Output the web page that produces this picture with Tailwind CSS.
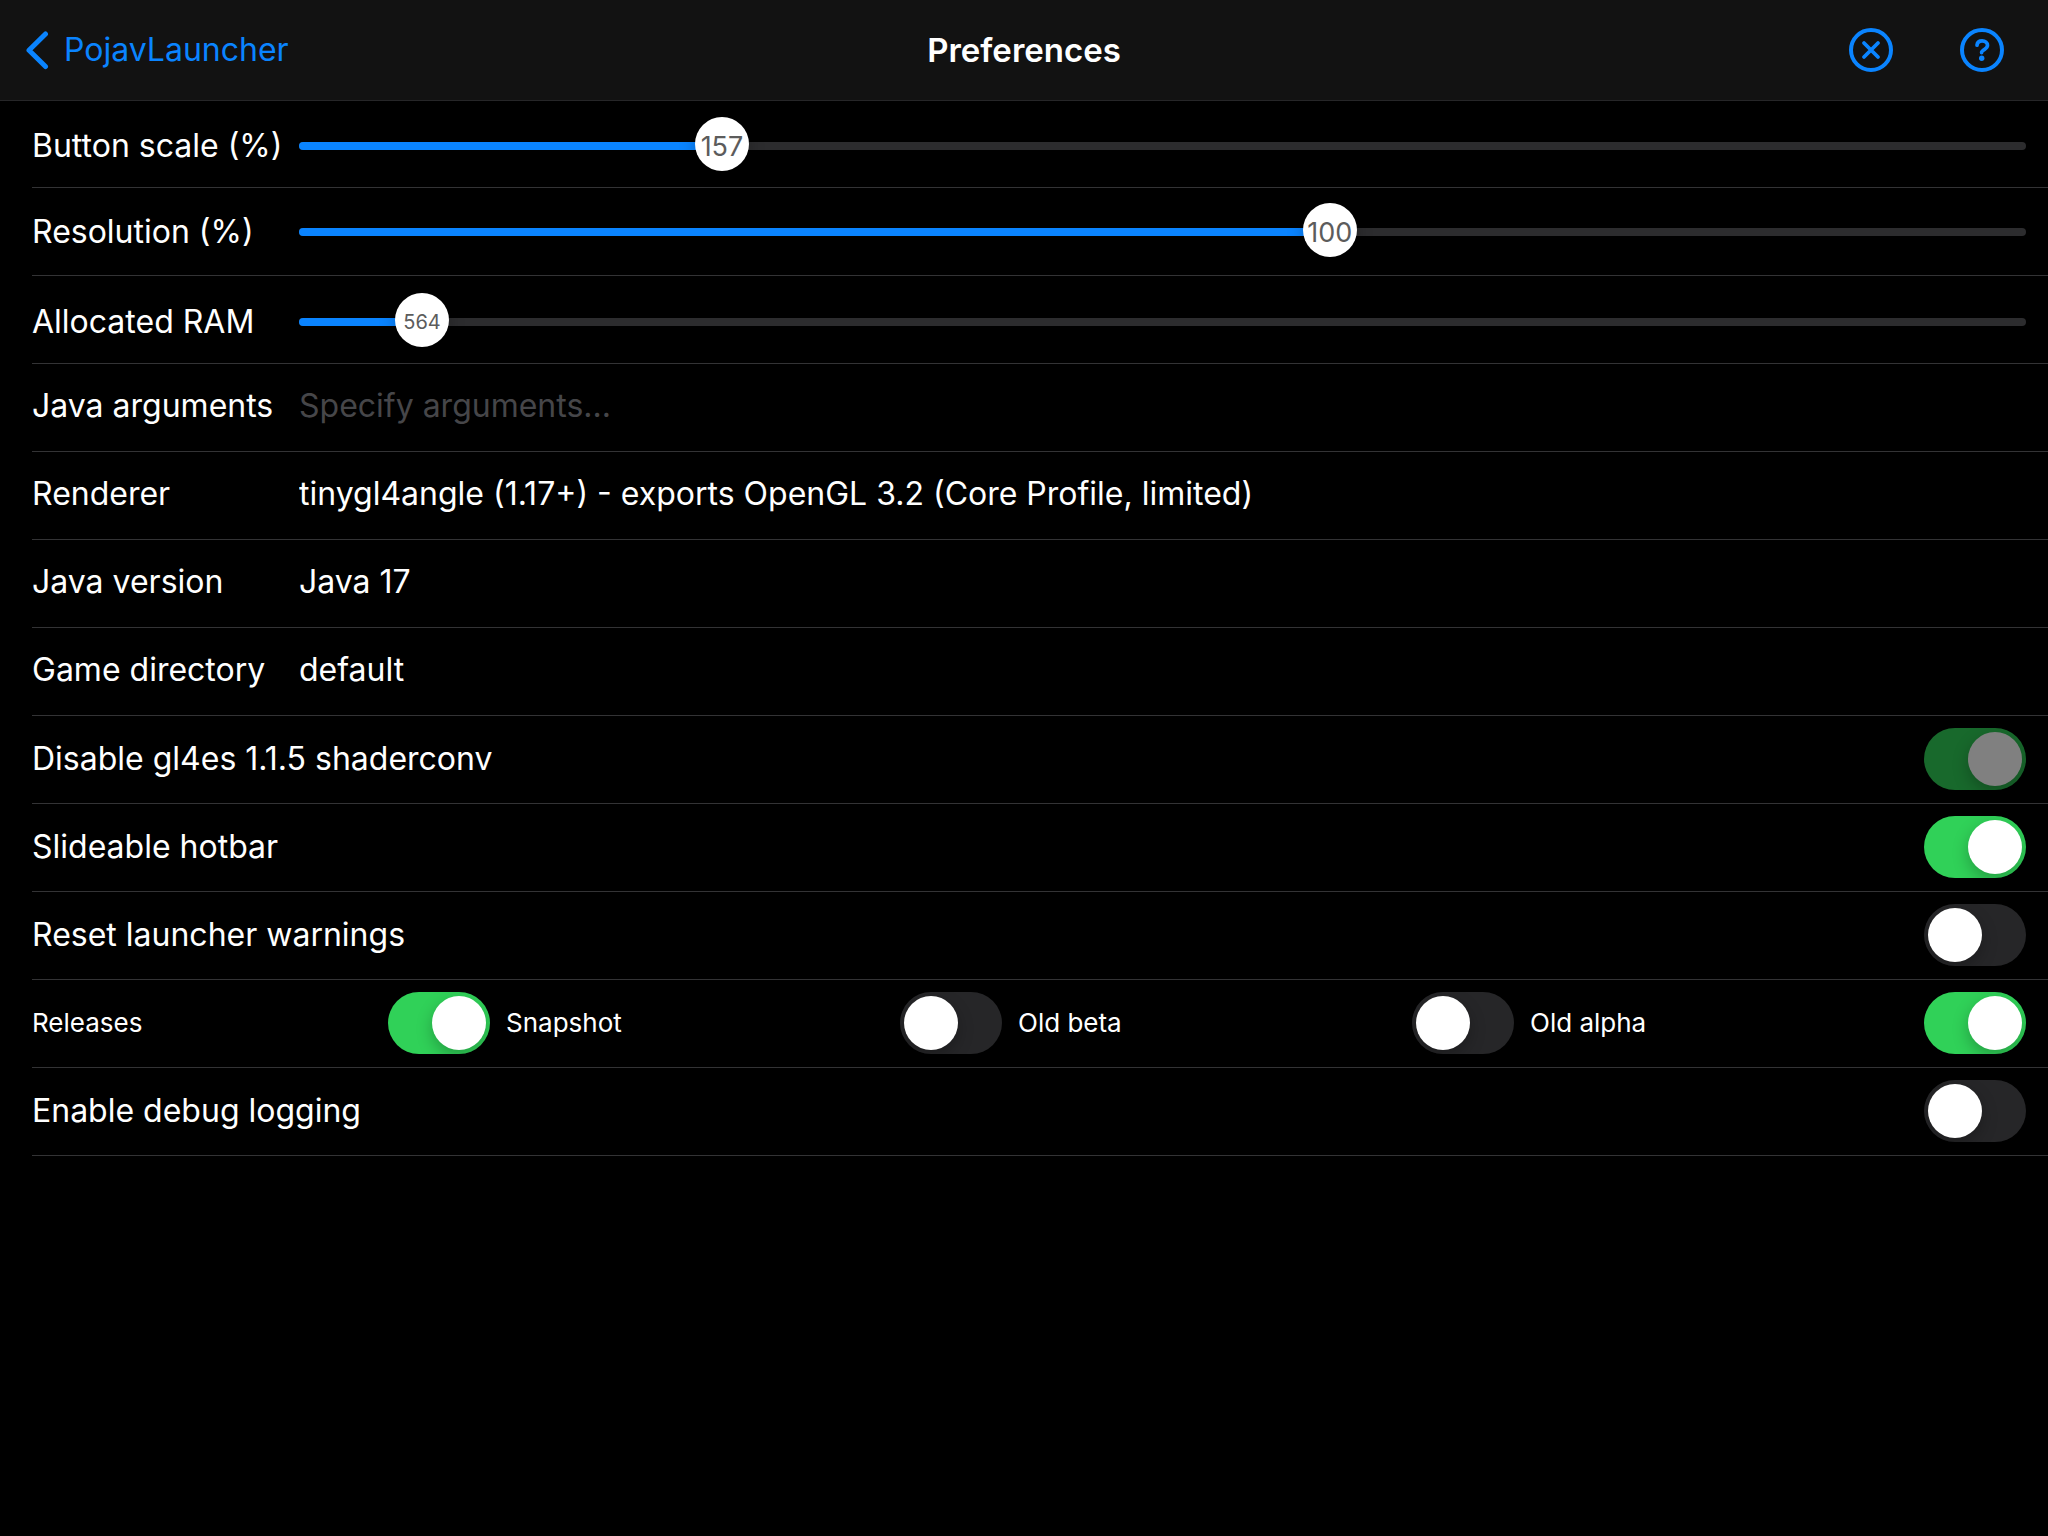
<!DOCTYPE html>
<html lang="en">
<head>
<meta charset="utf-8">
<meta name="viewport" content="width=device-width, initial-scale=1">
<title>Preferences</title>
<script src="https://cdn.jsdelivr.net/npm/@tailwindcss/browser@4"></script>
</head>
<body class="min-h-screen bg-black font-[Inter,'Liberation_Sans',sans-serif] text-[32px] leading-10 text-white">

<header class="grid h-[101px] grid-cols-[1fr_auto_1fr] items-center border-b border-[#262628] bg-[#121212]">
  <a href="#" class="flex items-center gap-3 justify-self-start pl-6 text-[#0a84ff]">
    <svg class="h-10 w-7" viewBox="0 0 28 40" fill="none" stroke="currentColor" stroke-width="5" stroke-linecap="round" stroke-linejoin="round" aria-hidden="true"><path d="M21.5 4 5 20.3 21.5 36.5"/></svg>
    PojavLauncher
  </a>
  <h1 class="text-[33px] font-semibold">Preferences</h1>
  <div class="flex items-center gap-[67px] justify-self-end pr-11 text-[#0a84ff]">
    <button type="button" aria-label="Close">
      <svg class="block size-11" viewBox="0 0 44 44" fill="none" stroke="currentColor" stroke-linecap="round" aria-hidden="true"><circle cx="22" cy="22" r="20" stroke-width="4"/><path d="M15 15 29 29M29 15 15 29" stroke-width="3.8"/></svg>
    </button>
    <button type="button" aria-label="Help">
      <svg class="block size-11" viewBox="0 0 44 44" fill="none" stroke="currentColor" stroke-linecap="round" aria-hidden="true"><circle cx="22" cy="22" r="20" stroke-width="4"/><path d="M17 17.2C17.3 14.3 19.2 12.9 22.1 12.9C25.3 12.9 27.5 14.6 27.5 17.3C27.5 19.2 26.4 20.2 24.6 21.3C22.6 22.5 21.6 23.2 21.6 24.6" stroke-width="3.7"/><circle cx="21.7" cy="30.2" r="2.7" fill="currentColor" stroke="none"/></svg>
    </button>
  </div>
</header>

<main class="pl-8">
<form>

  <!-- Sliders: --v is the position of the value between min and max -->
  <div class="flex h-[87px] items-center border-b border-[#333335] pt-1 pr-[22px]">
    <label for="scale" class="w-[267px] shrink-0">Button scale (%)</label>
    <div class="relative grow" style="--v:0.2367">
      <div class="h-2 overflow-hidden rounded-full bg-[#2c2c2e]"><div class="h-full w-[calc(27px+(100%-54px)*var(--v))] bg-[#0a84ff]"></div></div>
      <input id="scale" type="range" min="50" max="502" value="157" class="absolute inset-x-0 -top-[25px] h-[54px] w-full appearance-none bg-transparent [&::-webkit-slider-thumb]:size-[54px] [&::-webkit-slider-thumb]:appearance-none [&::-webkit-slider-thumb]:rounded-full [&::-webkit-slider-thumb]:bg-white [&::-webkit-slider-thumb]:shadow-[0_4px_16px_rgba(0,0,0,0.25)]">
      <output for="scale" class="pointer-events-none absolute top-1/2 left-[calc(27px+(100%-54px)*var(--v))] -translate-1/2 pt-0.5 text-[27px] text-[#5c5c5c]">157</output>
    </div>
  </div>

  <div class="flex h-[88px] items-center border-b border-[#333335] pr-[22px]">
    <label for="resolution" class="w-[267px] shrink-0">Resolution (%)</label>
    <div class="relative grow" style="--v:0.6">
      <div class="h-2 overflow-hidden rounded-full bg-[#2c2c2e]"><div class="h-full w-[calc(27px+(100%-54px)*var(--v))] bg-[#0a84ff]"></div></div>
      <input id="resolution" type="range" min="25" max="150" value="100" class="absolute inset-x-0 -top-[25px] h-[54px] w-full appearance-none bg-transparent [&::-webkit-slider-thumb]:size-[54px] [&::-webkit-slider-thumb]:appearance-none [&::-webkit-slider-thumb]:rounded-full [&::-webkit-slider-thumb]:bg-white [&::-webkit-slider-thumb]:shadow-[0_4px_16px_rgba(0,0,0,0.25)]">
      <output for="resolution" class="pointer-events-none absolute top-1/2 left-[calc(27px+(100%-54px)*var(--v))] -translate-1/2 pt-0.5 text-[27px] text-[#5c5c5c]">100</output>
    </div>
  </div>

  <div class="flex h-[88px] items-center border-b border-[#333335] pt-1 pr-[22px]">
    <label for="ram" class="w-[267px] shrink-0">Allocated RAM</label>
    <div class="relative grow" style="--v:0.0574">
      <div class="h-2 overflow-hidden rounded-full bg-[#2c2c2e]"><div class="h-full w-[calc(27px+(100%-54px)*var(--v))] bg-[#0a84ff]"></div></div>
      <input id="ram" type="range" min="256" max="5622" value="564" class="absolute inset-x-0 -top-[25px] h-[54px] w-full appearance-none bg-transparent [&::-webkit-slider-thumb]:size-[54px] [&::-webkit-slider-thumb]:appearance-none [&::-webkit-slider-thumb]:rounded-full [&::-webkit-slider-thumb]:bg-white [&::-webkit-slider-thumb]:shadow-[0_4px_16px_rgba(0,0,0,0.25)]">
      <output for="ram" class="pointer-events-none absolute top-1/2 left-[calc(27px+(100%-54px)*var(--v))] -translate-1/2 text-[20px] text-[#5c5c5c]">564</output>
    </div>
  </div>

  <!-- Text and picker fields -->
  <div class="flex h-[88px] items-center border-b border-[#333335] pr-[22px] pb-1">
    <label for="args" class="w-[267px] shrink-0">Java arguments</label>
    <input id="args" type="text" placeholder="Specify arguments..." class="min-w-0 grow bg-transparent outline-none placeholder:text-[#464649]">
  </div>
  <div class="flex h-[88px] items-center border-b border-[#333335] pr-[22px] pb-1">
    <label for="renderer" class="w-[267px] shrink-0">Renderer</label>
    <select id="renderer" class="min-w-0 grow appearance-none bg-transparent"><option>tinygl4angle (1.17+) - exports OpenGL 3.2 (Core Profile, limited)</option></select>
  </div>
  <div class="flex h-[88px] items-center border-b border-[#333335] pr-[22px] pb-1">
    <label for="java" class="w-[267px] shrink-0">Java version</label>
    <select id="java" class="min-w-0 grow appearance-none bg-transparent"><option>Java 17</option></select>
  </div>
  <div class="flex h-[88px] items-center border-b border-[#333335] pr-[22px] pb-1">
    <label for="gamedir" class="w-[267px] shrink-0">Game directory</label>
    <select id="gamedir" class="min-w-0 grow appearance-none bg-transparent"><option>default</option></select>
  </div>

  <!-- Switches -->
  <div class="flex h-[88px] items-center justify-between border-b border-[#333335] pr-[22px] pb-0.5">
    <label for="shaderconv">Disable gl4es 1.1.5 shaderconv</label>
    <input id="shaderconv" type="checkbox" role="switch" checked disabled class="flex h-[62px] w-[102px] shrink-0 appearance-none overflow-hidden rounded-full bg-[#262628] p-1 before:size-[54px] before:rounded-full before:bg-white before:shadow-[0_6px_16px_rgba(0,0,0,0.25)] checked:justify-end checked:bg-[#30d158] disabled:opacity-50">
  </div>
  <div class="flex h-[88px] items-center justify-between border-b border-[#333335] pr-[22px] pb-0.5">
    <label for="hotbar">Slideable hotbar</label>
    <input id="hotbar" type="checkbox" role="switch" checked class="flex h-[62px] w-[102px] shrink-0 appearance-none overflow-hidden rounded-full bg-[#262628] p-1 before:size-[54px] before:rounded-full before:bg-white before:shadow-[0_6px_16px_rgba(0,0,0,0.25)] checked:justify-end checked:bg-[#30d158]">
  </div>
  <div class="flex h-[88px] items-center justify-between border-b border-[#333335] pr-[22px] pb-0.5">
    <label for="warnings">Reset launcher warnings</label>
    <input id="warnings" type="checkbox" role="switch" class="flex h-[62px] w-[102px] shrink-0 appearance-none overflow-hidden rounded-full bg-[#262628] p-1 before:size-[54px] before:rounded-full before:bg-white before:shadow-[0_6px_16px_rgba(0,0,0,0.25)] checked:justify-end checked:bg-[#30d158]">
  </div>

  <!-- Version types -->
  <div class="grid h-[88px] grid-cols-[458fr_496fr_496fr_496fr] items-center gap-4 border-b border-[#333335] pr-[22px] pb-0.5 text-[26px]">
    <div class="flex items-center justify-between">
      <label for="releases">Releases</label>
      <input id="releases" type="checkbox" role="switch" checked class="flex h-[62px] w-[102px] shrink-0 appearance-none overflow-hidden rounded-full bg-[#262628] p-1 before:size-[54px] before:rounded-full before:bg-white before:shadow-[0_6px_16px_rgba(0,0,0,0.25)] checked:justify-end checked:bg-[#30d158]">
    </div>
    <div class="flex items-center justify-between">
      <label for="snapshot">Snapshot</label>
      <input id="snapshot" type="checkbox" role="switch" class="flex h-[62px] w-[102px] shrink-0 appearance-none overflow-hidden rounded-full bg-[#262628] p-1 before:size-[54px] before:rounded-full before:bg-white before:shadow-[0_6px_16px_rgba(0,0,0,0.25)] checked:justify-end checked:bg-[#30d158]">
    </div>
    <div class="flex items-center justify-between">
      <label for="beta">Old beta</label>
      <input id="beta" type="checkbox" role="switch" class="flex h-[62px] w-[102px] shrink-0 appearance-none overflow-hidden rounded-full bg-[#262628] p-1 before:size-[54px] before:rounded-full before:bg-white before:shadow-[0_6px_16px_rgba(0,0,0,0.25)] checked:justify-end checked:bg-[#30d158]">
    </div>
    <div class="flex items-center justify-between">
      <label for="alpha">Old alpha</label>
      <input id="alpha" type="checkbox" role="switch" checked class="flex h-[62px] w-[102px] shrink-0 appearance-none overflow-hidden rounded-full bg-[#262628] p-1 before:size-[54px] before:rounded-full before:bg-white before:shadow-[0_6px_16px_rgba(0,0,0,0.25)] checked:justify-end checked:bg-[#30d158]">
    </div>
  </div>

  <div class="flex h-[88px] items-center justify-between border-b border-[#333335] pr-[22px] pb-0.5">
    <label for="debug">Enable debug logging</label>
    <input id="debug" type="checkbox" role="switch" class="flex h-[62px] w-[102px] shrink-0 appearance-none overflow-hidden rounded-full bg-[#262628] p-1 before:size-[54px] before:rounded-full before:bg-white before:shadow-[0_6px_16px_rgba(0,0,0,0.25)] checked:justify-end checked:bg-[#30d158]">
  </div>

</form>
</main>
</body>
</html>
